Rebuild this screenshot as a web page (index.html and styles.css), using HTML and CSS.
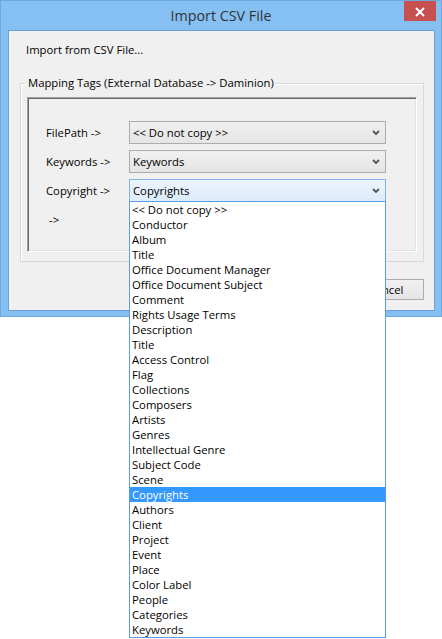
FILE: index.html
```html
<!DOCTYPE html>
<html>
<head>
<meta charset="utf-8">
<title>Import CSV File</title>
<link rel="stylesheet" href="styles.css">
</head>
<body>
<div class="window">
  <div class="titlebar">
    <span class="title">Import CSV File</span>
    <div class="close">
      <svg width="10" height="10" viewBox="0 0 10 10"><path d="M1 1 L9 9 M9 1 L1 9" stroke="#fff" stroke-width="2" fill="none"/></svg>
    </div>
  </div>
  <div class="client">
    <div class="intro">Import from CSV File...</div>
    <div class="group">
      <div class="legend">Mapping Tags (External Database -&gt; Daminion)</div>
      <div class="panel">
        <div class="rows">
          <div class="label">FilePath -&gt;</div>
          <div class="combo"><span>&lt;&lt; Do not copy &gt;&gt;</span><svg class="chev" width="8" height="6" viewBox="0 0 8 6"><path d="M1 1 L4 4 L7 1" stroke="#555" stroke-width="1.8" fill="none"/></svg></div>
          <div class="label">Keywords -&gt;</div>
          <div class="combo"><span>Keywords</span><svg class="chev" width="8" height="6" viewBox="0 0 8 6"><path d="M1 1 L4 4 L7 1" stroke="#555" stroke-width="1.8" fill="none"/></svg></div>
          <div class="label">Copyright -&gt;</div>
          <div class="combo focused"><span>Copyrights</span><svg class="chev" width="8" height="6" viewBox="0 0 8 6"><path d="M1 1 L4 4 L7 1" stroke="#555" stroke-width="1.8" fill="none"/></svg>
            <ul class="dropdown">
              <li>&lt;&lt; Do not copy &gt;&gt;</li>
              <li>Conductor</li>
              <li>Album</li>
              <li>Title</li>
              <li>Office Document Manager</li>
              <li>Office Document Subject</li>
              <li>Comment</li>
              <li>Rights Usage Terms</li>
              <li>Description</li>
              <li>Title</li>
              <li>Access Control</li>
              <li>Flag</li>
              <li>Collections</li>
              <li>Composers</li>
              <li>Artists</li>
              <li>Genres</li>
              <li>Intellectual Genre</li>
              <li>Subject Code</li>
              <li>Scene</li>
              <li class="selected">Copyrights</li>
              <li>Authors</li>
              <li>Client</li>
              <li>Project</li>
              <li>Event</li>
              <li>Place</li>
              <li>Color Label</li>
              <li>People</li>
              <li>Categories</li>
              <li>Keywords</li>
            </ul>
          </div>
          <div class="label arrow">-&gt;</div>
        </div>
      </div>
    </div>
    <div class="buttons">
      <div class="btn">OK</div>
      <div class="btn">Cancel</div>
    </div>
  </div>
</div>
</body>
</html>
```
FILE: styles.css
```css
* { box-sizing: border-box; }
html, body { margin: 0; padding: 0; background: #fff; }
html { height: 639px; }
body {
  min-height: 639px;
  font-family: "Open Sans", "Noto Sans", sans-serif;
  font-size: 11.3px;
  color: #000;
}
.window {
  width: 442px;
  height: 317px;
  background: #86bff2;
  border: 1px solid #6fa6dc;
  padding: 0 6px 0 7px;
}
.titlebar {
  position: relative;
  height: 29px;
  margin: 0 -6px 0 -7px;
  text-align: center;
}
.title {
  font-size: 14.3px;
  line-height: 29px;
  color: #333;
}
.close {
  position: absolute;
  top: 0;
  right: 5px;
  width: 32px;
  height: 20px;
  background: #c75050;
  display: flex;
  align-items: center;
  justify-content: center;
}
.close svg { margin-top: 1px; }
.client {
  width: 427px;
  height: 281px;
  background: #f0f0f0;
  border: 1px solid #6c9fd4;
  padding-top: 11px;
}
.intro {
  line-height: 15px;
  padding-left: 17px;
}
.group {
  margin: 26px 10px 0 11px;
  border: 1px solid #d8d8d8;
  box-shadow: inset 1px 1px 0 #fff;
  height: 179px;
}
.legend {
  width: fit-content;
  margin: -9px 0 0 5px;
  padding: 0 2px;
  line-height: 15px;
  background: #f0f0f0;
}
.panel {
  margin: 7px 6px 0 6px;
  height: 155px;
  border: 1px solid;
  border-color: #a0a0a0 #fff #fff #a0a0a0;
  box-shadow: inset 1px 1px 0 #696969, inset -1px -1px 0 #e3e3e3;
  padding: 23px 0 0 18px;
}
.rows {
  display: grid;
  grid-template-columns: 83px 257px;
  grid-auto-rows: 23px;
  row-gap: 6px;
}
.label {
  line-height: 23px;
  white-space: nowrap;
}
.label.arrow { padding-left: 3px; }
.combo {
  position: relative;
  height: 23px;
  border: 1px solid #acacac;
  background: linear-gradient(#f0f0f0, #e5e5e5);
  display: flex;
  align-items: center;
  justify-content: space-between;
  padding: 0 5px 0 3px;
  line-height: 21px;
}
.combo.focused {
  border-color: #7eb4ea;
  background: linear-gradient(#ecf4fc, #dcecfc);
}
.chev { margin-top: 1px; }
.dropdown {
  position: absolute;
  top: 100%;
  left: -1px;
  right: -1px;
  margin: 0;
  padding: 0;
  list-style: none;
  background: #fff;
  border: 1px solid #5a9de3;
  z-index: 10;
}
.dropdown li {
  height: 15px;
  line-height: 15px;
  padding-left: 2px;
  white-space: nowrap;
}
.dropdown li.selected {
  background: #3399ff;
  color: #fff;
}
.buttons {
  display: flex;
  justify-content: flex-end;
  gap: 6px;
  margin: 17px 10px 0 0;
}
.btn {
  width: 76px;
  height: 21px;
  border: 1px solid #acacac;
  background: linear-gradient(#f0f0f0, #e5e5e5);
  text-align: center;
  line-height: 19px;
}
```
